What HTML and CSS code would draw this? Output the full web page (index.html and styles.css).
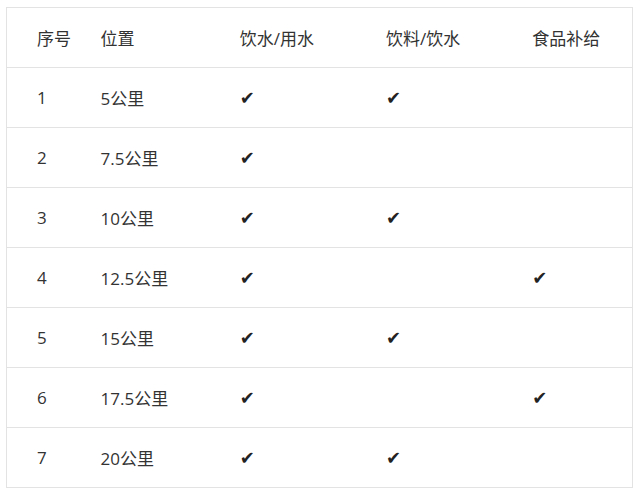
FILE: index.html
```html
<!DOCTYPE html>
<html lang="zh">
<head>
<meta charset="utf-8">
<link rel="stylesheet" href="styles.css">
</head>
<body>
<div class="wrap">
<table class="tbl">
<colgroup>
<col class="c1"><col class="c2"><col class="c3"><col class="c4"><col class="c5">
</colgroup>
<thead>
<tr><th>序号</th><th>位置</th><th>饮水/用水</th><th>饮料/饮水</th><th>食品补给</th></tr>
</thead>
<tbody>
<tr><td>1</td><td>5公里</td><td><span class="ck">✔</span></td><td><span class="ck">✔</span></td><td></td></tr>
<tr><td>2</td><td>7.5公里</td><td><span class="ck">✔</span></td><td></td><td></td></tr>
<tr><td>3</td><td>10公里</td><td><span class="ck">✔</span></td><td><span class="ck">✔</span></td><td></td></tr>
<tr><td>4</td><td>12.5公里</td><td><span class="ck">✔</span></td><td></td><td><span class="ck">✔</span></td></tr>
<tr><td>5</td><td>15公里</td><td><span class="ck">✔</span></td><td><span class="ck">✔</span></td><td></td></tr>
<tr><td>6</td><td>17.5公里</td><td><span class="ck">✔</span></td><td></td><td><span class="ck">✔</span></td></tr>
<tr><td>7</td><td>20公里</td><td><span class="ck">✔</span></td><td><span class="ck">✔</span></td><td></td></tr>
</tbody>
</table>
</div>
</body>
</html>
```
FILE: styles.css
```css
html, body {
  margin: 0;
  padding: 0;
  background: #fff;
}
.wrap {
  padding: 7px 7px 0 6px;
}
.tbl {
  width: 627px;
  border-collapse: collapse;
  table-layout: fixed;
  border: 1px solid #e3e3e3;
  font-family: "Open Sans", "Noto Sans CJK SC", sans-serif;
  font-size: 17px;
  color: #333;
}
.c1 { width: 64px; }
.c2 { width: 139px; }
.c3 { width: 146px; }
.c4 { width: 146px; }
.c5 { width: 130px; }
.tbl th, .tbl td {
  height: 59px;
  padding: 0 0 0 30px;
  text-align: left;
  vertical-align: middle;
  font-weight: normal;
  white-space: nowrap;
}
.tbl td {
  border-top: 1px solid #e3e3e3;
}
.ck {
  font-family: "DejaVu Sans", sans-serif;
  font-size: 18px;
  color: #222;
}
```
